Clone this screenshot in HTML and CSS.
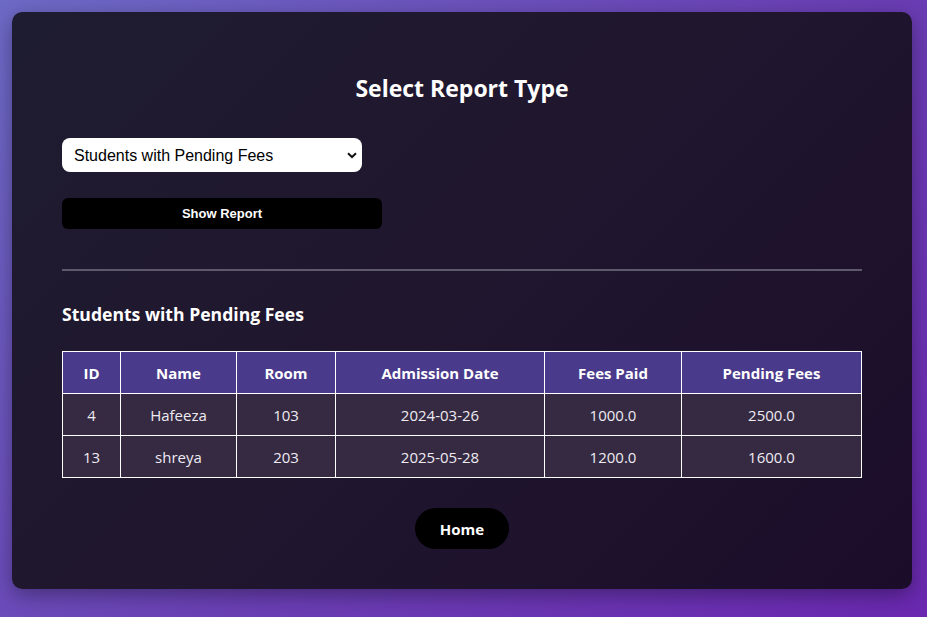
FILE: index.html
```html
<!DOCTYPE html>
<html lang="en">
<head>
<meta charset="utf-8">
<title>Reports</title>
<link rel="stylesheet" href="styles.css">
</head>
<body>
<div class="card">
  <h2 class="title">Select Report Type</h2>
  <div class="select-wrap">
    <select class="report-select">
      <option>Students with Pending Fees</option>
    </select>
    <svg class="chev" width="10" height="7" viewBox="0 0 10 7"><path d="M1 1.2 L5 5 L9 1.2" fill="none" stroke="#111" stroke-width="2"/></svg>
  </div>
  <button class="show-btn">Show Report</button>
  <div class="divider"></div>
  <h3 class="sub">Students with Pending Fees</h3>
  <table class="data">
    <colgroup>
      <col style="width:58px"><col style="width:116px"><col style="width:99px"><col style="width:209px"><col style="width:137px"><col style="width:180px">
    </colgroup>
    <thead>
      <tr><th>ID</th><th>Name</th><th>Room</th><th>Admission Date</th><th>Fees Paid</th><th>Pending Fees</th></tr>
    </thead>
    <tbody>
      <tr><td>4</td><td>Hafeeza</td><td>103</td><td>2024-03-26</td><td>1000.0</td><td>2500.0</td></tr>
      <tr><td>13</td><td>shreya</td><td>203</td><td>2025-05-28</td><td>1200.0</td><td>1600.0</td></tr>
    </tbody>
  </table>
  <div class="home-row"><a class="home-btn">Home</a></div>
</div>
</body>
</html>
```
FILE: styles.css
```css
html, body {
  margin: 0;
  height: 100%;
}
body {
  background: linear-gradient(135deg, #6d6ac6 0%, #6a3fb4 55%, #6a28b0 100%);
  padding: 12px 15px 28px 12px;
  box-sizing: border-box;
  font-family: "Open Sans", "Noto Sans", sans-serif;
  color: #fff;
}
.card {
  width: 900px;
  box-sizing: border-box;
  padding: 60px 50px 40px;
  border-radius: 10px;
  background: linear-gradient(135deg, #1e1c30 0%, #20162e 50%, #1b0d2a 100%);
  box-shadow: 0 6px 20px rgba(0, 0, 0, 0.35);
}
.title {
  margin: 0;
  font-size: 23px;
  line-height: 33px;
  font-weight: 700;
  text-align: center;
  color: #fff;
}
.select-wrap {
  position: relative;
  width: 300px;
  margin-top: 33px;
}
.report-select {
  appearance: none;
  -webkit-appearance: none;
  display: block;
  width: 300px;
  height: 34px;
  border: none;
  border-radius: 8px;
  background: #fff;
  padding: 0 12px;
  font-family: "Liberation Sans", Arial, sans-serif;
  font-size: 16px;
  color: #000;
}
.chev {
  position: absolute;
  right: 5px;
  top: 14px;
}
.show-btn {
  display: block;
  width: 320px;
  height: 31px;
  margin-top: 26px;
  border: none;
  border-radius: 6px;
  background: #000;
  color: #fff;
  font-family: "Liberation Sans", Arial, sans-serif;
  font-weight: 700;
  font-size: 13px;
}
.divider {
  height: 2px;
  margin-top: 40px;
  background: #5f5a6b;
}
.sub {
  margin: 31px 0 0;
  font-size: 17.6px;
  line-height: 24px;
  font-weight: 700;
  color: #fff;
}
.data {
  margin-top: 25px;
  width: 799px;
  table-layout: fixed;
  border-collapse: collapse;
  font-size: 15px;
}
.data th, .data td {
  border: 1px solid #fff;
  height: 41px;
  padding: 0;
  text-align: center;
}
.data th {
  background: #4a3a8b;
  font-weight: 700;
  color: #fff;
}
.data td {
  background: #352a41;
  color: #eeeaf2;
}
.home-row {
  display: flex;
  justify-content: center;
  margin-top: 30px;
}
.home-btn {
  display: flex;
  align-items: center;
  justify-content: center;
  width: 94px;
  height: 41px;
  border-radius: 21px;
  background: #000;
  color: #fff;
  font-weight: 700;
  font-size: 15px;
}
```
